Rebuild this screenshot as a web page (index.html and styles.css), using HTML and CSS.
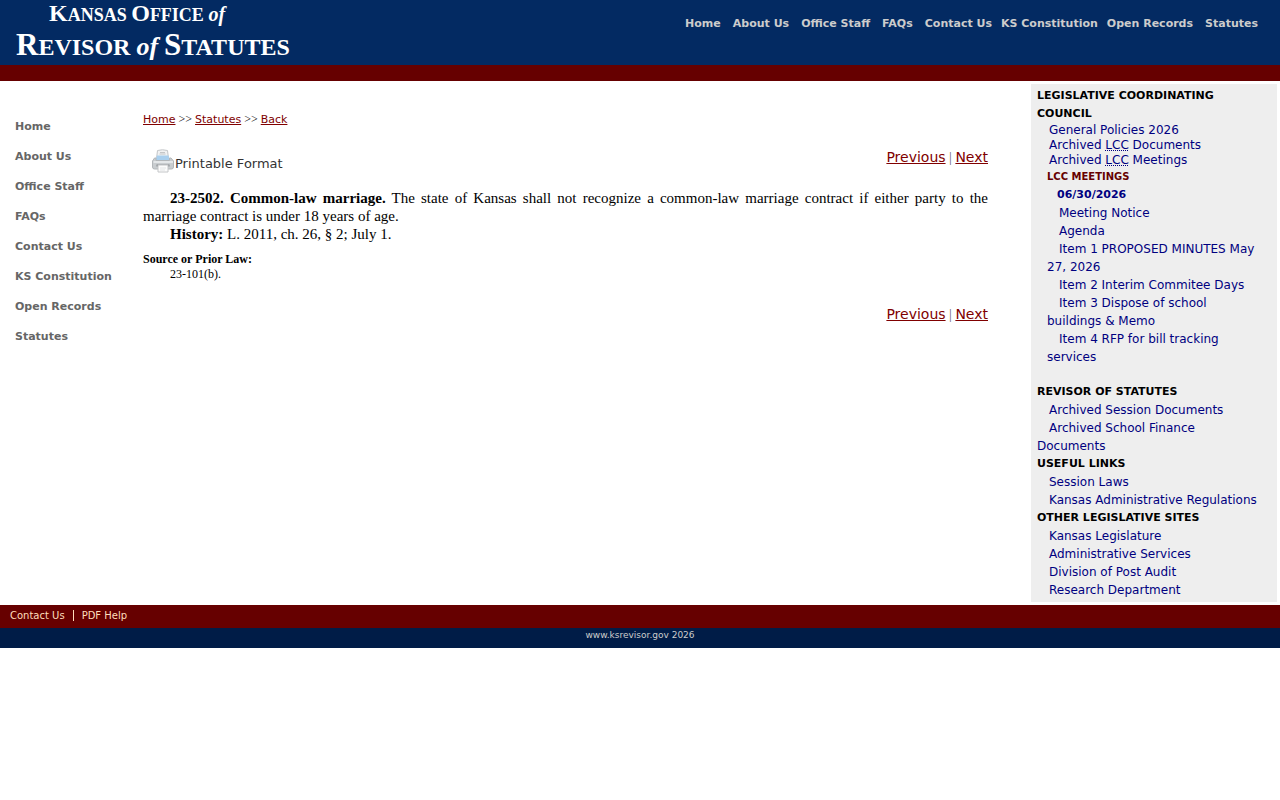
FILE: index.html
```html
<!DOCTYPE html>
<html lang="en">

<head>
    <meta charset="UTF-8">
    <meta name="viewport" content="width=device-width, initial-scale=1.0">
    <title>23-2502. Common-law marriage</title>
    <link rel="stylesheet" href="styles.css">
</head>

<body>
    <header class="header">
        <a class="logo" href="#">
            <span class="logo-top"><span class="cap">K</span>ANSAS <span class="cap">O</span>FFICE <i>of</i></span>
            <span class="logo-main"><span class="cap">R</span>EVISOR <i>of</i> <span class="cap">S</span>TATUTES</span>
        </a>
        <nav class="top-nav">
            <a href="#">Home</a>
            <a href="#">About Us</a>
            <a href="#">Office Staff</a>
            <a href="#">FAQs</a>
            <a href="#">Contact Us</a>
            <a class="long" href="#">KS Constitution</a>
            <a class="long" href="#">Open Records</a>
            <a href="#">Statutes</a>
        </nav>
    </header>

    <div class="page">
        <nav class="side-nav">
            <a href="#">Home</a>
            <a href="#">About Us</a>
            <a href="#">Office Staff</a>
            <a href="#">FAQs</a>
            <a href="#">Contact Us</a>
            <a href="#">KS Constitution</a>
            <a href="#">Open Records</a>
            <a href="#">Statutes</a>
        </nav>

        <main class="content">
            <p class="breadcrumb"><a href="#">Home</a> &gt;&gt; <a href="#">Statutes</a> &gt;&gt; <a href="#">Back</a></p>

            <div class="tools">
                <a class="print" href="#">
                    <svg width="24" height="24" viewBox="0 0 24 24">
                        <path d="M6.500 1.500q5-1.500 10 0l1 8h-12z" fill="#f1f2f3" stroke="#c3c6c8"/>
                        <path d="M9 3.500h5M8.500 5h6" stroke="#c4c6c8"/>
                        <path d="M6 6.500h11.500l1.500 5H4.500z" fill="#a9cfee"/>
                        <path d="M3.500 9H5v2.500h13.500V9H20l2.500 3v6q0 2-2 2h-17q-2 0-2-2v-6z" fill="#c9cdd0" stroke="#b3b7ba"/>
                        <path d="M2.500 12h19.500v2h-19.500z" fill="#e4e7e9"/>
                        <path d="M5.500 15.500h13v2h-13z" fill="#868b8f"/>
                        <path d="M7 16h10v7H7z" fill="#fbfbfb" stroke="#c4c6c8"/>
                        <path d="M9 19h6M9 21h5" stroke="#e2e4e5"/>
                    </svg>
                    <span>Printable Format</span>
                </a>
                <div class="pager"><a href="#">Previous</a> | <a href="#">Next</a></div>
            </div>

            <div class="statute">
                <p><b>23-2502. Common-law marriage.</b> The state of Kansas shall not recognize a common-law marriage contract if either party to the marriage contract is under 18 years of age.</p>
                <p><b>History:</b> L. 2011, ch. 26, § 2; July 1.</p>
            </div>
            <div class="source">
                <h2>Source or Prior Law:</h2>
                <p>23-101(b).</p>
            </div>

            <div class="pager"><a href="#">Previous</a> | <a href="#">Next</a></div>
        </main>

        <aside class="sidebar">
            <h2>LEGISLATIVE COORDINATING COUNCIL</h2>
            <ul class="tight">
                <li><a href="#">General Policies 2026</a></li>
                <li><a href="#">Archived <abbr title="Legislative Coordinating Council">LCC</abbr> Documents</a></li>
                <li><a href="#">Archived <abbr title="Legislative Coordinating Council">LCC</abbr> Meetings</a></li>
            </ul>
            <div class="meetings">
                <h3>LCC MEETINGS</h3>
                <h4>06/30/2026</h4>
                <ul>
                    <li><a href="#">Meeting Notice</a></li>
                    <li><a href="#">Agenda</a></li>
                    <li><a href="#">Item 1 PROPOSED MINUTES May 27, 2026</a></li>
                    <li><a href="#">Item 2 Interim Commitee Days</a></li>
                    <li><a href="#">Item 3 Dispose of school buildings &amp; Memo</a></li>
                    <li><a href="#">Item 4 RFP for bill tracking services</a></li>
                </ul>
            </div>

            <h2>REVISOR OF STATUTES</h2>
            <ul>
                <li><a href="#">Archived Session Documents</a></li>
                <li><a href="#">Archived School Finance Documents</a></li>
            </ul>
            <h2>USEFUL LINKS</h2>
            <ul>
                <li><a href="#">Session Laws</a></li>
                <li><a href="#">Kansas Administrative Regulations</a></li>
            </ul>
            <h2>OTHER LEGISLATIVE SITES</h2>
            <ul>
                <li><a href="#">Kansas Legislature</a></li>
                <li><a href="#">Administrative Services</a></li>
                <li><a href="#">Division of Post Audit</a></li>
                <li><a href="#">Research Department</a></li>
            </ul>
        </aside>
    </div>

    <footer>
        <div class="footer-links"><a href="#">Contact Us</a><a href="#">PDF Help</a></div>
        <div class="footer-site">www.ksrevisor.gov 2026</div>
    </footer>
</body>

</html>
```

FILE: styles.css
```css
* {
    margin: 0;
    padding: 0;
    box-sizing: border-box;
}

body {
    font-family: Verdana, "DejaVu Sans", sans-serif;
    font-size: 12px;
    line-height: 18px;
    background-color: #fff;
    color: #000;
}

ul {
    list-style: none;
}

/* header */
.header {
    display: flex;
    justify-content: space-between;
    background-color: #032a62;
    border-bottom: 16px solid #660000;
}

.logo {
    padding: 0 0 1px 16px;
    color: #fff;
    font-family: "Times New Roman", "Liberation Serif", serif;
    font-weight: bold;
    text-decoration: none;
}

.logo-top,
.logo-main {
    display: block;
}

.logo-top {
    padding-left: 33px;
    font-size: 18px;
    line-height: 30px;
}

.logo-main {
    font-size: 24px;
    line-height: 34px;
}

.logo .cap,
.logo i {
    line-height: 0;
}

.logo-top .cap {
    font-size: 24px;
}

.logo-top i {
    font-size: 20px;
}

.logo-main .cap {
    font-size: 31px;
}

.logo-main i {
    font-size: 26px;
}

.top-nav {
    display: flex;
    gap: 12px;
    padding: 15px 22px 0 0;
}

.top-nav a {
    color: #ccc;
    font-size: 11px;
    font-weight: bold;
    text-decoration: none;
}

.top-nav .long {
    margin-left: -3px;
}

/* columns */
.page {
    display: grid;
    grid-template-columns: 143px 1fr 246px;
    padding: 3px 3px 3px 0;
}

.side-nav {
    display: flex;
    flex-direction: column;
    gap: 12px;
    padding: 34px 0 0 15px;
}

.side-nav a {
    color: #666;
    font-size: 11px;
    font-weight: bold;
    text-decoration: none;
}

.content {
    padding: 26px 43px 0 0;
}

.content a {
    color: #800000;
    font-family: Verdana, "DejaVu Sans", sans-serif;
}

.breadcrumb {
    font-family: "Times New Roman", "Liberation Serif", serif;
    font-size: 12px;
}

.breadcrumb a {
    font-size: 11px;
}

.tools {
    display: flex;
    justify-content: space-between;
    padding: 20px 0 16px 8px;
}

.content .print {
    display: flex;
    align-items: flex-end;
    color: #333;
    font-size: 13px;
    text-decoration: none;
}

.pager {
    color: #666;
    font-family: "Times New Roman", "Liberation Serif", serif;
    font-size: 14px;
    line-height: 16px;
    text-align: right;
}

.statute {
    font-family: "Times New Roman", "Liberation Serif", serif;
    font-size: 15px;
    text-align: justify;
}

.statute p {
    text-indent: 27px;
}

.source {
    padding: 9px 0 24px;
    font-family: "Times New Roman", "Liberation Serif", serif;
    line-height: 15px;
}

.source h2 {
    font-size: 12px;
}

.source p {
    text-indent: 27px;
}

/* right column */
.sidebar {
    padding: 3px 14px 3px 6px;
    background-color: #eee;
}

.sidebar h2,
.sidebar h3,
.sidebar h4 {
    font-size: 11px;
}

.sidebar li {
    text-indent: 12px;
}

.sidebar a {
    color: #000080;
    text-decoration: none;
}

.tight {
    line-height: 15px;
}

.meetings {
    padding: 0 0 17px 10px;
}

.sidebar h3 {
    color: #660000;
    font-size: 10px;
}

.sidebar h4 {
    padding-left: 10px;
    color: #000080;
}

/* footer */
.footer-links {
    padding: 2px 10px 3px;
    background-color: #660000;
    font-size: 10px;
}

.footer-links a {
    color: #fdb;
    text-decoration: none;
}

.footer-links a + a {
    margin-left: 8px;
    padding-left: 8px;
    border-left: 1px solid #fdb;
}

.footer-site {
    padding-bottom: 6px;
    background-color: #001c47;
    color: #ccc;
    font-size: 9px;
    line-height: 14px;
    text-align: center;
}
```
